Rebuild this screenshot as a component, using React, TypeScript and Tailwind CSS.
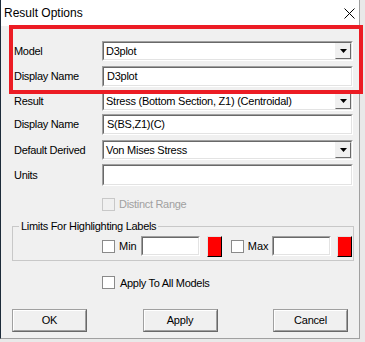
import React from "react";

const font = { fontFamily: '"Liberation Sans", Arial, sans-serif' };

function Sunken({ className = "", children }: { className?: string; children?: React.ReactNode }) {
  return (
    <div className={`border border-t-[#a0a0a0] border-l-[#a0a0a0] border-r-white border-b-white ${className}`}>
      <div className="h-full w-full border border-t-[#696969] border-l-[#696969] border-r-[#e3e3e3] border-b-[#e3e3e3] bg-white flex items-center">
        {children}
      </div>
    </div>
  );
}

function Combo({ text }: { text: string }) {
  return (
    <Sunken className="w-[251px] h-[20px]">
      <span className="flex-1 pl-[2px] text-[11px] tracking-[-0.25px] text-black leading-none whitespace-nowrap overflow-hidden">{text}</span>
      <div className="w-[16px] h-[16px] bg-[#f0f0f0] border border-t-[#f0f0f0] border-l-[#f0f0f0] border-r-[#696969] border-b-[#696969] flex items-center justify-center">
        <svg width="7" height="4" viewBox="0 0 7 4">
          <path d="M0 0H7L3.5 4Z" fill="#000" />
        </svg>
      </div>
    </Sunken>
  );
}

function TextBox({ text = "", className = "w-[251px] h-[21px]" }: { text?: string; className?: string }) {
  return (
    <Sunken className={className}>
      <span className="pl-[3px] text-[11px] tracking-[-0.25px] text-black leading-none whitespace-nowrap">{text}</span>
    </Sunken>
  );
}

function Check({ disabled = false }: { disabled?: boolean }) {
  return (
    <div
      className={`w-[13px] h-[13px] border ${
        disabled ? "border-[#c8c8c8] bg-[#f0f0f0]" : "border-[#8a8a8a] bg-white"
      }`}
    />
  );
}

function Row({ label, children, className = "" }: { label: string; children: React.ReactNode; className?: string }) {
  return (
    <div className={`flex items-center ${className}`}>
      <div className="w-[101px] shrink-0 pl-[13px] text-[11px] tracking-[-0.3px] text-black whitespace-nowrap">{label}</div>
      {children}
    </div>
  );
}

function ColorBtn() {
  return (
    <div className="w-[15px] h-[21px] bg-[#ff0000] border border-t-[#e3e3e3] border-l-[#e3e3e3] border-r-black border-b-black" />
  );
}

function Button({ label }: { label: string }) {
  return (
    <div className="w-[75px] h-[23px] border border-t-[#a0a0a0] border-l-[#a0a0a0] border-r-[#696969] border-b-[#696969] bg-[#f0f0f0]">
      <div className="h-full w-full border border-t-white border-l-white border-r-[#a0a0a0] border-b-[#a0a0a0] flex items-center justify-center text-[11px] tracking-[-0.2px] text-black">
        {label}
      </div>
    </div>
  );
}

export default function App() {
  return (
    <div className="relative w-[365px] h-[342px] bg-[#e9e9e9] overflow-hidden" style={font}>
      <div className="w-[360px] h-[339px] bg-[#f0f0f0] border-r border-b border-[#a0a0a0] border-l border-l-[#1d2b3a] flex flex-col">
        {/* title bar */}
        <div className="h-[26px] bg-white flex items-center justify-between pl-[3px] pr-[4px]">
          <span className="text-[12px] text-black">Result Options</span>
          <svg width="11" height="11" viewBox="0 0 11 11">
            <path d="M0.5 0.5L10.5 10.5M10.5 0.5L0.5 10.5" stroke="#000" strokeWidth="1" />
          </svg>
        </div>

        <Row label="Model" className="mt-[15px]">
          <Combo text="D3plot" />
        </Row>
        <Row label="Display Name" className="mt-[5px]">
          <TextBox text="D3plot" />
        </Row>
        <Row label="Result" className="mt-[4px]">
          <Combo text="Stress (Bottom Section, Z1) (Centroidal)" />
        </Row>
        <Row label="Display Name" className="mt-[3px]">
          <TextBox text="S(BS,Z1)(C)" />
        </Row>
        <Row label="Default Derived" className="mt-[5px]">
          <Combo text="Von Mises Stress" />
        </Row>
        <Row label="Units" className="mt-[4px]">
          <TextBox className="w-[251px] h-[22px]" />
        </Row>

        <div className="mt-[10px] pl-[101px] flex items-center gap-[4px]">
          <Check disabled />
          <span className="text-[11px] tracking-[-0.3px] text-[#a0a0a0]">Distinct Range</span>
        </div>

        <fieldset className="mt-[7px] ml-[11px] w-[342px] h-[41px] border border-[#c8c8c8] rounded-none px-0">
          <legend className="ml-[6px] px-[2px] text-[11px] tracking-[-0.3px] text-black leading-[13px]">Limits For Highlighting Labels</legend>
          <div className="flex items-center pl-[89px] mt-[3px]">
            <Check />
            <span className="ml-[4px] text-[11px] text-black">Min</span>
            <TextBox className="ml-[4px] w-[59px] h-[20px]" />
            <div className="ml-[7px]">
              <ColorBtn />
            </div>
            <div className="ml-[9px]">
              <Check />
            </div>
            <span className="ml-[4px] text-[11px] text-black">Max</span>
            <TextBox className="ml-[3px] w-[59px] h-[20px]" />
            <div className="ml-[6px]">
              <ColorBtn />
            </div>
          </div>
        </fieldset>

        <div className="mt-[14px] pl-[101px] flex items-center gap-[5px]">
          <Check />
          <span className="text-[11px] tracking-[-0.3px] text-black">Apply To All Models</span>
        </div>

        <div className="mt-[18px] pl-[11px] pr-[6px] flex items-center justify-between w-[353px]">
          <Button label="OK" />
          <Button label="Apply" />
          <Button label="Cancel" />
        </div>
      </div>

      {/* annotation overlay */}
      <div className="absolute left-[9px] top-[25px] w-[354px] h-[69px] border-[4px] border-[#ec1c24] pointer-events-none" />
    </div>
  );
}
